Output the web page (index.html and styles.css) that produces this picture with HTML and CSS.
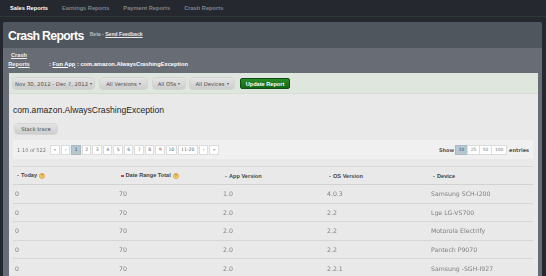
FILE: index.html
```html
<!DOCTYPE html>
<html>
<head>
<meta charset="utf-8">
<link rel="stylesheet" href="styles.css">
</head>
<body>
<nav class="topnav">
  <a class="tab active">Sales Reports</a>
  <a class="tab">Earnings Reports</a>
  <a class="tab">Payment Reports</a>
  <a class="tab">Crash Reports</a>
</nav>
<div class="panel">
  <header class="page-head">
    <h1 class="title">Crash Reports</h1>
    <span class="beta">Beta - <a class="beta-link">Send Feedback</a></span>
  </header>
  <div class="crumbs">
    <a class="crumb-root">Crash Reports</a>
    <span class="crumb-rest">: <a class="crumb-link">Fun App</a> : com.amazon.AlwaysCrashingException</span>
  </div>
  <div class="content">
    <div class="filters">
      <button class="btn btn-date">Nov 30, 2012 - Dec 7, 2012<span class="caret"></span></button>
      <button class="btn btn-ver">All Versions<span class="caret"></span></button>
      <button class="btn btn-os">All OSs<span class="caret"></span></button>
      <button class="btn btn-dev">All Devices<span class="caret"></span></button>
      <button class="btn-go">Update Report</button>
    </div>
    <div class="main">
      <h2 class="exc">com.amazon.AlwaysCrashingException</h2>
      <button class="btn btn-stack">Stack trace</button>
      <div class="pager-bar">
        <div class="pager-left">
          <span class="info">1-10 of 522</span>
          <div class="pager">
            <span class="pg pg-w">&laquo;</span>
            <span class="pg">&lsaquo;</span>
            <span class="pg active">1</span>
            <span class="pg">2</span>
            <span class="pg">3</span>
            <span class="pg">4</span>
            <span class="pg">5</span>
            <span class="pg">6</span>
            <span class="pg">7</span>
            <span class="pg">8</span>
            <span class="pg">9</span>
            <span class="pg">10</span>
            <span class="pg pg-r">11-20</span>
            <span class="pg">&rsaquo;</span>
            <span class="pg pg-w">&raquo;</span>
          </div>
        </div>
        <div class="show">
          <span class="lbl">Show</span>
          <div class="sizes">
            <span class="sz active">10</span><span class="sz">25</span><span class="sz">50</span><span class="sz">100</span>
          </div>
          <span class="lbl">entries</span>
        </div>
      </div>
      <table class="grid">
        <thead>
          <tr>
            <th><span class="sort"></span>Today<span class="help">?</span></th>
            <th><span class="sort on"></span>Date Range Total<span class="help">?</span></th>
            <th><span class="sort"></span>App Version</th>
            <th><span class="sort"></span>OS Version</th>
            <th><span class="sort"></span>Device</th>
          </tr>
        </thead>
        <tbody>
          <tr><td>0</td><td>70</td><td>1.0</td><td>4.0.3</td><td>Samsung SCH-I200</td></tr>
          <tr><td>0</td><td>70</td><td>2.0</td><td>2.2</td><td>Lge LG-VS700</td></tr>
          <tr><td>0</td><td>70</td><td>2.0</td><td>2.2</td><td>Motorola Electrify</td></tr>
          <tr><td>0</td><td>70</td><td>2.0</td><td>2.2</td><td>Pantech P9070</td></tr>
          <tr><td>0</td><td>70</td><td>2.0</td><td>2.2.1</td><td>Samsung -SGH-I927</td></tr>
        </tbody>
      </table>
    </div>
  </div>
</div>
</body>
</html>
```

FILE: styles.css
```css
* { box-sizing: border-box; margin: 0; padding: 0; }
body {
  background: #25282e;
  font-family: "Liberation Sans", Arial, sans-serif;
  width: 546px;
  height: 276px;
  overflow: hidden;
}
.topnav {
  display: flex;
  gap: 14px;
  padding-left: 10px;
  height: 17px;
  align-items: center;
  border-bottom: 1px solid #2e3833;
}
.tab { font-size: 5.7px; font-weight: bold; color: #80848b; }
.tab.active { color: #ffffff; }

.panel {
  margin: 5px 0 0 3px;
  width: 539px;
  height: 260px;
  background: #686d75;
  border-radius: 3px 3px 0 0;
  overflow: hidden;
}
.page-head {
  display: flex;
  align-items: flex-start;
  height: 26px;
  padding: 8px 0 0 5px;
  background: #50565e;
}
.title {
  font-size: 12.3px;
  line-height: 12px;
  letter-spacing: -0.7px;
  color: #ffffff;
  font-weight: bold;
}
.beta {
  margin: 1px 0 0 6px;
  font-size: 5.1px;
  font-weight: bold;
  color: #b8bcc1;
}
.beta-link { color: #e8eaec; text-decoration: underline; }

.crumbs {
  display: flex;
  align-items: flex-end;
  height: 25px;
  padding: 0 0 5px 1px;
  gap: 15px;
  font-size: 5.7px;
  font-weight: bold;
  line-height: 8.5px;
  color: #ffffff;
}
.crumb-root {
  width: 30px;
  text-align: center;
  text-decoration: underline;
  color: #eef0f2;
}
.crumb-link { text-decoration: underline; }

.content {
  margin: 0 4px 0 6px;
  background: #e9e9e9;
  height: 220px;
}
.filters {
  display: flex;
  gap: 6px;
  height: 21px;
  padding: 5px 0 0 4px;
  background: #dfe6de;
  border-bottom: 1px solid #d5dcd4;
}
.btn {
  display: inline-flex;
  align-items: center;
  justify-content: center;
  gap: 2px;
  height: 11px;
  border: none;
  border-radius: 3px;
  background: linear-gradient(#e4e4e4, #cdcdcd);
  box-shadow: 0 0 0 0.5px #c4c4c4;
  font-family: "DejaVu Sans", Verdana, sans-serif;
  font-size: 5.3px;
  color: #4d4d4d;
}
.btn-date { width: 81px; }
.btn-ver { width: 47px; }
.btn-os { width: 32px; }
.btn-dev { width: 44px; margin-left: -1px; }
.caret {
  width: 0;
  height: 0;
  border-left: 1.5px solid transparent;
  border-right: 1.5px solid transparent;
  border-top: 2px solid #555555;
}
.btn-go {
  width: 50px;
  height: 11px;
  border: 1px solid #0f4d10;
  border-radius: 2px;
  background: linear-gradient(#2b8c2b, #136813);
  color: #ffffff;
  font-family: "Liberation Sans", Arial, sans-serif;
  font-weight: bold;
  font-size: 5.6px;
}

.main { padding: 0 5px 0 4px; }
.exc {
  margin-top: 11px;
  font-size: 8.6px;
  line-height: 10px;
  font-weight: normal;
  color: #1f1f1f;
}
.btn-stack {
  display: flex;
  width: 42px;
  height: 10px;
  margin: 9px 0 0 2px;
  font-size: 5.2px;
  color: #444444;
}
.pager-bar {
  display: flex;
  justify-content: space-between;
  align-items: center;
  height: 19px;
  margin-top: 6px;
  padding: 0 4px;
  background: #f0f0f0;
  font-family: "DejaVu Sans", Verdana, sans-serif;
}
.pager-left { display: flex; align-items: center; gap: 4px; }
.info { font-size: 5px; color: #777777; filter: grayscale(1); }
.pager { display: flex; gap: 1px; }
.pg {
  display: flex;
  align-items: center;
  justify-content: center;
  min-width: 9.5px;
  height: 10px;
  padding: 0 1.5px;
  background: #ffffff;
  border: 1px solid #dcdcdc;
  font-size: 4.6px;
  color: #666666;
}
.pg-w { min-width: 10px; }
.pg-r { min-width: 20px; }
.pg.active, .sz.active { background: #b5c7d0; border-color: #a9bac3; color: #3d4a52; }
.show { display: flex; align-items: center; gap: 2px; }
.lbl { font-size: 5px; font-weight: bold; color: #555555; }
.sizes { display: flex; }
.sz {
  display: flex;
  align-items: center;
  justify-content: center;
  min-width: 13px;
  height: 10px;
  padding: 0 2px;
  background: #ffffff;
  border: 1px solid #dcdcdc;
  margin-left: -1px;
  font-size: 4.4px;
  color: #777777;
}
.sz:last-child { min-width: 16px; }
.grid {
  width: 520px;
  margin-top: 7px;
  border-collapse: collapse;
  table-layout: fixed;
  border-top: 1px solid #d8d8d8;
}
.grid th {
  height: 18px;
  padding-left: 4px;
  text-align: left;
  font-size: 5.6px;
  font-weight: bold;
  color: #444444;
  border-bottom: 1px solid #d2d2d2;
  vertical-align: middle;
  white-space: nowrap;
}
.sort {
  display: inline-block;
  width: 2px;
  height: 1px;
  margin-right: 2px;
  vertical-align: middle;
  background: #9a9a9a;
}
.sort.on { width: 3px; height: 2px; background: #e23c1e; margin-right: 1.5px; }
.help {
  display: inline-flex;
  align-items: center;
  justify-content: center;
  width: 6px;
  height: 6px;
  margin-left: 2px;
  border-radius: 50%;
  background: #f7cf7f;
  border: 0.5px solid #e8a93a;
  color: #b36b00;
  font-size: 4px;
  vertical-align: middle;
}
.grid tbody { filter: grayscale(1); }
.grid td {
  height: 18.6px;
  padding-left: 2px;
  font-family: "DejaVu Sans", Verdana, sans-serif;
  font-size: 6.2px;
  color: #808080;
  border-bottom: 1px solid #d6d6d6;
  vertical-align: middle;
  white-space: nowrap;
}
```
